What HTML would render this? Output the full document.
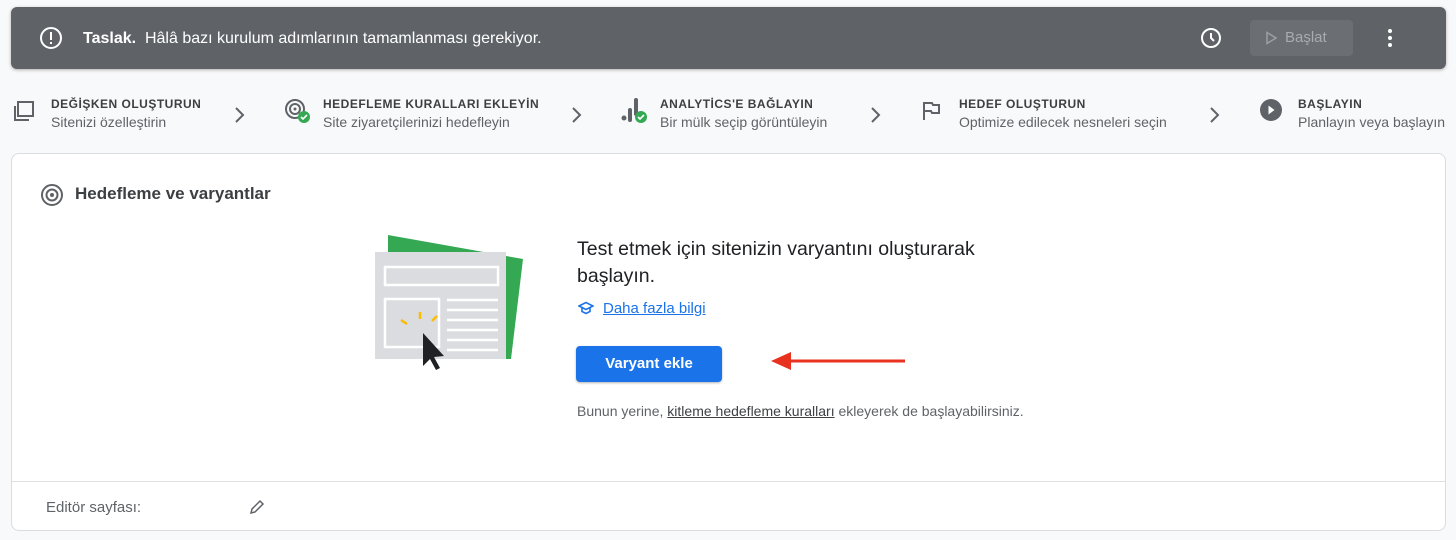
<!DOCTYPE html>
<html><head><meta charset="utf-8"><style>
*{margin:0;padding:0;box-sizing:border-box}
body{width:1456px;height:540px;background:#f8f9fa;font-family:"Liberation Sans",Arial,sans-serif;position:relative;overflow:hidden;color:#202124}
.banner{position:absolute;left:11px;top:7px;width:1435px;height:62px;background:#5f6368;border-radius:6px;box-shadow:0 1px 3px rgba(0,0,0,.3);color:#fff}
.abs{position:absolute}
.st .t{position:absolute;font-size:12px;font-weight:bold;letter-spacing:.5px;color:#3c4043}
.st .s{position:absolute;font-size:14px;color:#5f6368}
.card{position:absolute;left:11px;top:153px;width:1435px;height:378px;background:#fff;border:1px solid #dadce0;border-radius:8px}
</style></head><body>
<div class="banner">
<svg class="abs" style="left:28px;top:19px" width="24" height="24" viewBox="0 0 24 24"><circle cx="12" cy="12" r="10" fill="none" stroke="#fff" stroke-width="2"/><rect x="11" y="6" width="2" height="8" fill="#fff"/><rect x="11" y="16" width="2" height="2" fill="#fff"/></svg>
<div class="abs" style="left:72px;top:23px;font-size:16px"><b>Taslak.</b>&nbsp;&nbsp;Hâlâ bazı kurulum adımlarının tamamlanması gerekiyor.</div>
<svg class="abs" style="left:1188px;top:19px" width="24" height="24" viewBox="0 0 24 24"><circle cx="12" cy="12" r="9" fill="none" stroke="#fff" stroke-width="2"/><path d="M12 7v5l3 3" fill="none" stroke="#fff" stroke-width="2"/></svg>
<div class="abs" style="left:1239px;top:13px;width:103px;height:36px;background:#6b6e72;border-radius:4px"></div>
<svg class="abs" style="left:1253px;top:24px" width="14" height="14" viewBox="0 0 14 14"><path d="M3 1.5L12 7 3 12.5z" fill="none" stroke="#9aa0a6" stroke-width="1.5"/></svg>
<div class="abs" style="left:1274px;top:22px;font-size:15px;color:#a8abaf">Başlat</div>
<svg class="abs" style="left:1376px;top:20px" width="6" height="22" viewBox="0 0 6 22"><circle cx="3" cy="4" r="2" fill="#fff"/><circle cx="3" cy="11" r="2" fill="#fff"/><circle cx="3" cy="18" r="2" fill="#fff"/></svg>
</div>

<div class="st">
<svg class="abs" style="left:12px;top:99px" width="24" height="24" viewBox="0 0 24 24"><rect x="6" y="3" width="15" height="14" fill="none" stroke="#5f6368" stroke-width="2"/><path d="M3 7v14h14" fill="none" stroke="#5f6368" stroke-width="2"/></svg>
<div class="t" style="left:51px;top:97px">DEĞİŞKEN OLUŞTURUN</div><div class="s" style="left:51px;top:114px">Sitenizi özelleştirin</div>
<svg class="abs" style="left:234px;top:106px" width="12" height="18" viewBox="0 0 12 18"><path d="M2 2l7 7-7 7" fill="none" stroke="#5f6368" stroke-width="2"/></svg>
<svg class="abs" style="left:284px;top:98px" width="28" height="28" viewBox="0 0 28 28"><circle cx="11" cy="11" r="9" fill="none" stroke="#5f6368" stroke-width="2"/><circle cx="11" cy="11" r="5" fill="none" stroke="#5f6368" stroke-width="2"/><circle cx="11" cy="11" r="1.5" fill="#5f6368"/><circle cx="20" cy="19" r="6" fill="#34a853"/><path d="M17 19l2 2 4-4" fill="none" stroke="#fff" stroke-width="1.6"/></svg>
<div class="t" style="left:323px;top:97px">HEDEFLEME KURALLARI EKLEYİN</div><div class="s" style="left:323px;top:114px">Site ziyaretçilerinizi hedefleyin</div>
<svg class="abs" style="left:571px;top:106px" width="12" height="18" viewBox="0 0 12 18"><path d="M2 2l7 7-7 7" fill="none" stroke="#5f6368" stroke-width="2"/></svg>
<svg class="abs" style="left:620px;top:96px" width="30" height="30" viewBox="0 0 30 30"><circle cx="4" cy="22" r="2.5" fill="#5f6368"/><rect x="8" y="12" width="4" height="14" rx="2" fill="#5f6368"/><rect x="14" y="2" width="4" height="18" rx="2" fill="#5f6368"/><circle cx="21" cy="21" r="6" fill="#34a853"/><path d="M18 21l2 2 4-4" fill="none" stroke="#fff" stroke-width="1.6"/></svg>
<div class="t" style="left:660px;top:97px">ANALYTİCS'E BAĞLAYIN</div><div class="s" style="left:660px;top:114px">Bir mülk seçip görüntüleyin</div>
<svg class="abs" style="left:870px;top:106px" width="12" height="18" viewBox="0 0 12 18"><path d="M2 2l7 7-7 7" fill="none" stroke="#5f6368" stroke-width="2"/></svg>
<svg class="abs" style="left:920px;top:99px" width="22" height="24" viewBox="0 0 22 24"><path d="M4 3v18M4 4h8l1 2h6v8h-7l-1-2H4" fill="none" stroke="#5f6368" stroke-width="2"/></svg>
<div class="t" style="left:959px;top:97px">HEDEF OLUŞTURUN</div><div class="s" style="left:959px;top:114px">Optimize edilecek nesneleri seçin</div>
<svg class="abs" style="left:1209px;top:106px" width="12" height="18" viewBox="0 0 12 18"><path d="M2 2l7 7-7 7" fill="none" stroke="#5f6368" stroke-width="2"/></svg>
<svg class="abs" style="left:1259px;top:98px" width="24" height="24" viewBox="0 0 24 24"><circle cx="12" cy="12" r="11" fill="#5f6368"/><path d="M9.5 7.5l6 4.5-6 4.5z" fill="#fff"/></svg>
<div class="t" style="left:1298px;top:97px">BAŞLAYIN</div><div class="s" style="left:1298px;top:114px">Planlayın veya başlayın</div>
</div>

<div class="card">
<svg class="abs" style="left:28px;top:29px" width="24" height="24" viewBox="0 0 24 24"><circle cx="12" cy="12" r="10" fill="none" stroke="#5f6368" stroke-width="2"/><circle cx="12" cy="12" r="5.5" fill="none" stroke="#5f6368" stroke-width="2"/><circle cx="12" cy="12" r="2" fill="#5f6368"/></svg>
<div class="abs" style="left:63px;top:30px;font-size:17px;font-weight:bold;color:#3c4043">Hedefleme ve varyantlar</div>
<svg class="abs" style="left:362px;top:78px" width="160" height="145" viewBox="0 0 160 145"><path d="M14 3L149 27 137 127 14 127z" fill="#34a853"/><rect x="1" y="20" width="131" height="107" fill="#dadce0"/><rect x="11" y="35" width="113" height="18" fill="none" stroke="#fff" stroke-width="2.5"/><rect x="11" y="67" width="54" height="48" fill="none" stroke="#fff" stroke-width="2.5"/><g stroke="#fff" stroke-width="2.5"><path d="M73 68h51M73 78h51M73 88h51M73 98h51M73 108h51M73 118h51"/></g><g stroke="#fbbc04" stroke-width="2.5"><path d="M27 88l6 4M46 80v7M63 84l-5 5"/></g><path d="M49 101v33l7-7 6 11 4-2-6-11 10-1z" fill="#202124"/></svg>
<div class="abs" style="left:565px;top:82px;font-size:19.5px;line-height:27px;color:#202124;width:450px">Test etmek için sitenizin varyantını oluşturarak<br>başlayın.</div>
<svg class="abs" style="left:566px;top:147px" width="16" height="14" viewBox="0 0 16 14"><path d="M1 5l7-3.5L15 5 8 8.5z M4 7v3.5l4 2 4-2V7" fill="none" stroke="#1a73e8" stroke-width="1.6"/></svg>
<div class="abs" style="left:591px;top:146px;font-size:15px;color:#1a73e8;text-decoration:underline">Daha fazla bilgi</div>
<div class="abs" style="left:564px;top:192px;width:146px;height:36px;background:#1a73e8;border-radius:4px;color:#fff;font-size:15px;font-weight:bold;text-align:center;line-height:36px;box-shadow:0 1px 2px rgba(0,0,0,.3)">Varyant ekle</div>
<svg class="abs" style="left:757px;top:196px" width="138" height="22" viewBox="0 0 138 22"><path d="M18 11h118" stroke="#e8321f" stroke-width="3"/><path d="M2 11L22 2v18z" fill="#e8321f"/></svg>
<div class="abs" style="left:565px;top:249px;font-size:14px;color:#5f6368">Bunun yerine, <span style="text-decoration:underline;color:#3c4043">kitleme hedefleme kuralları</span> ekleyerek de başlayabilirsiniz.</div>
<div class="abs" style="left:0;top:327px;width:1433px;height:1px;background:#e0e0e0"></div>
<div class="abs" style="left:34px;top:345px;font-size:15px;color:#5f6368">Editör sayfası:</div>
<svg class="abs" style="left:237px;top:345px" width="16" height="16" viewBox="0 0 16 16"><path d="M2 14l1-4 8-8 3 3-8 8z" fill="none" stroke="#5f6368" stroke-width="1.5"/></svg>
</div>
</body></html>
